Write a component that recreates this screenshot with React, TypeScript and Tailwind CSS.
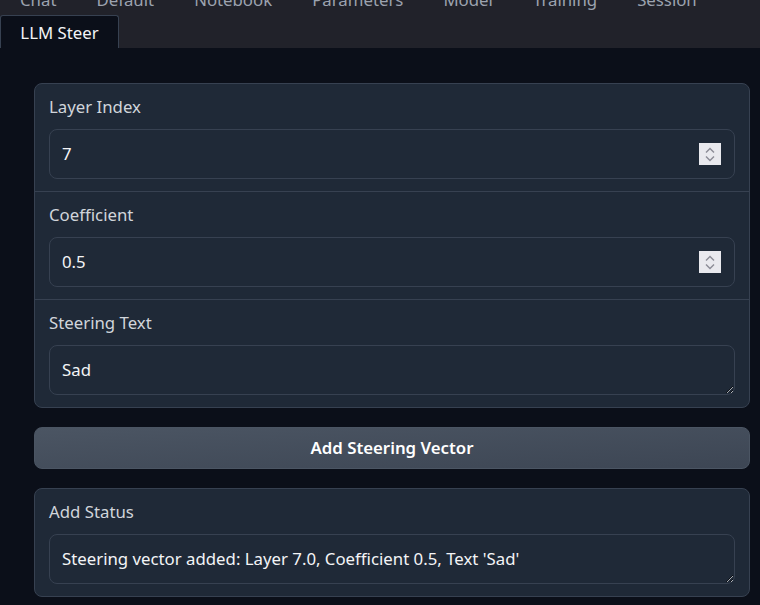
import React from "react";

const font = { fontFamily: '"Noto Sans", "Open Sans", sans-serif' };

function Spinner() {
  return (
    <div className="absolute right-[13px] top-1/2 -translate-y-1/2 w-[22px] h-[22px] bg-[#e9e9ee] flex flex-col items-center justify-center gap-[3px]">
      <svg width="10" height="6" viewBox="0 0 10 6" fill="none">
        <path d="M1 5.5 L5 1.5 L9 5.5" stroke="#8b8b96" strokeWidth="1.4" />
      </svg>
      <svg width="10" height="6" viewBox="0 0 10 6" fill="none">
        <path d="M1 0.5 L5 4.5 L9 0.5" stroke="#8b8b96" strokeWidth="1.4" />
      </svg>
    </div>
  );
}

function NumberBlock({ label, value, last }: { label: string; value: string; last?: boolean }) {
  return (
    <div className={`px-[14px] pt-[11px] pb-[12px] ${last ? "" : "border-b border-[#374151]"}`}>
      <div className="text-[16.8px] leading-6 text-[#d1d5db] mb-[10px]">{label}</div>
      <div className="relative h-[50px] rounded-lg border border-[#374151] bg-[#1f2937] flex items-center px-3 text-[16.8px] text-[#f3f4f6]">
        {value}
        <Spinner />
      </div>
    </div>
  );
}

function TextBlock({ label, value }: { label: string; value: string }) {
  return (
    <div className="px-[14px] pt-[11px] pb-[12px]">
      <div className="text-[16.8px] leading-6 text-[#d1d5db] mb-[10px]">{label}</div>
      <textarea
        readOnly
        value={value}
        rows={1}
        className="block w-full h-[50px] rounded-lg border border-[#374151] bg-[#1f2937] px-3 py-3 text-[16.8px] leading-6 text-[#f3f4f6] outline-none resize-y overflow-hidden"
        style={font}
      />
    </div>
  );
}

export default function App() {
  const tabs = ["Chat", "Default", "Notebook", "Parameters", "Model", "Training", "Session"];
  return (
    <div className="w-[760px] h-[605px] overflow-hidden bg-[#0b0f19]" style={font}>
      <div className="bg-[#21222a] h-[48px] relative overflow-hidden">
        <div className="flex absolute top-[-17px] left-0">
          {tabs.map((t) => (
            <div key={t} className="h-[33px] px-5 flex items-center text-[16.8px] text-[#9ca3af] whitespace-nowrap">
              {t}
            </div>
          ))}
        </div>
        <div className="absolute top-[15px] left-0 h-[34px] w-[119px] flex items-center justify-center bg-[#0b0f19] border border-b-0 border-[#374151] text-[16.8px] text-[#f3f4f6] rounded-t-[3px]">
          LLM Steer
        </div>
      </div>
      <div className="pl-[34px] pr-[10px] pt-[35px] flex flex-col gap-[19px]">
        <div className="rounded-lg border border-[#374151] bg-[#1f2937]">
          <NumberBlock label="Layer Index" value="7" />
          <NumberBlock label="Coefficient" value="0.5" />
          <TextBlock label="Steering Text" value="Sad" />
        </div>
        <button className="h-[42px] rounded-lg border border-[#4b5563] bg-gradient-to-br from-[#4b5563] to-[#3d4654] text-[16.8px] font-semibold text-white" style={font}>
          Add Steering Vector
        </button>
        <div className="rounded-lg border border-[#374151] bg-[#1f2937]">
          <TextBlock label="Add Status" value="Steering vector added: Layer 7.0, Coefficient 0.5, Text 'Sad'" />
        </div>
      </div>
    </div>
  );
}
